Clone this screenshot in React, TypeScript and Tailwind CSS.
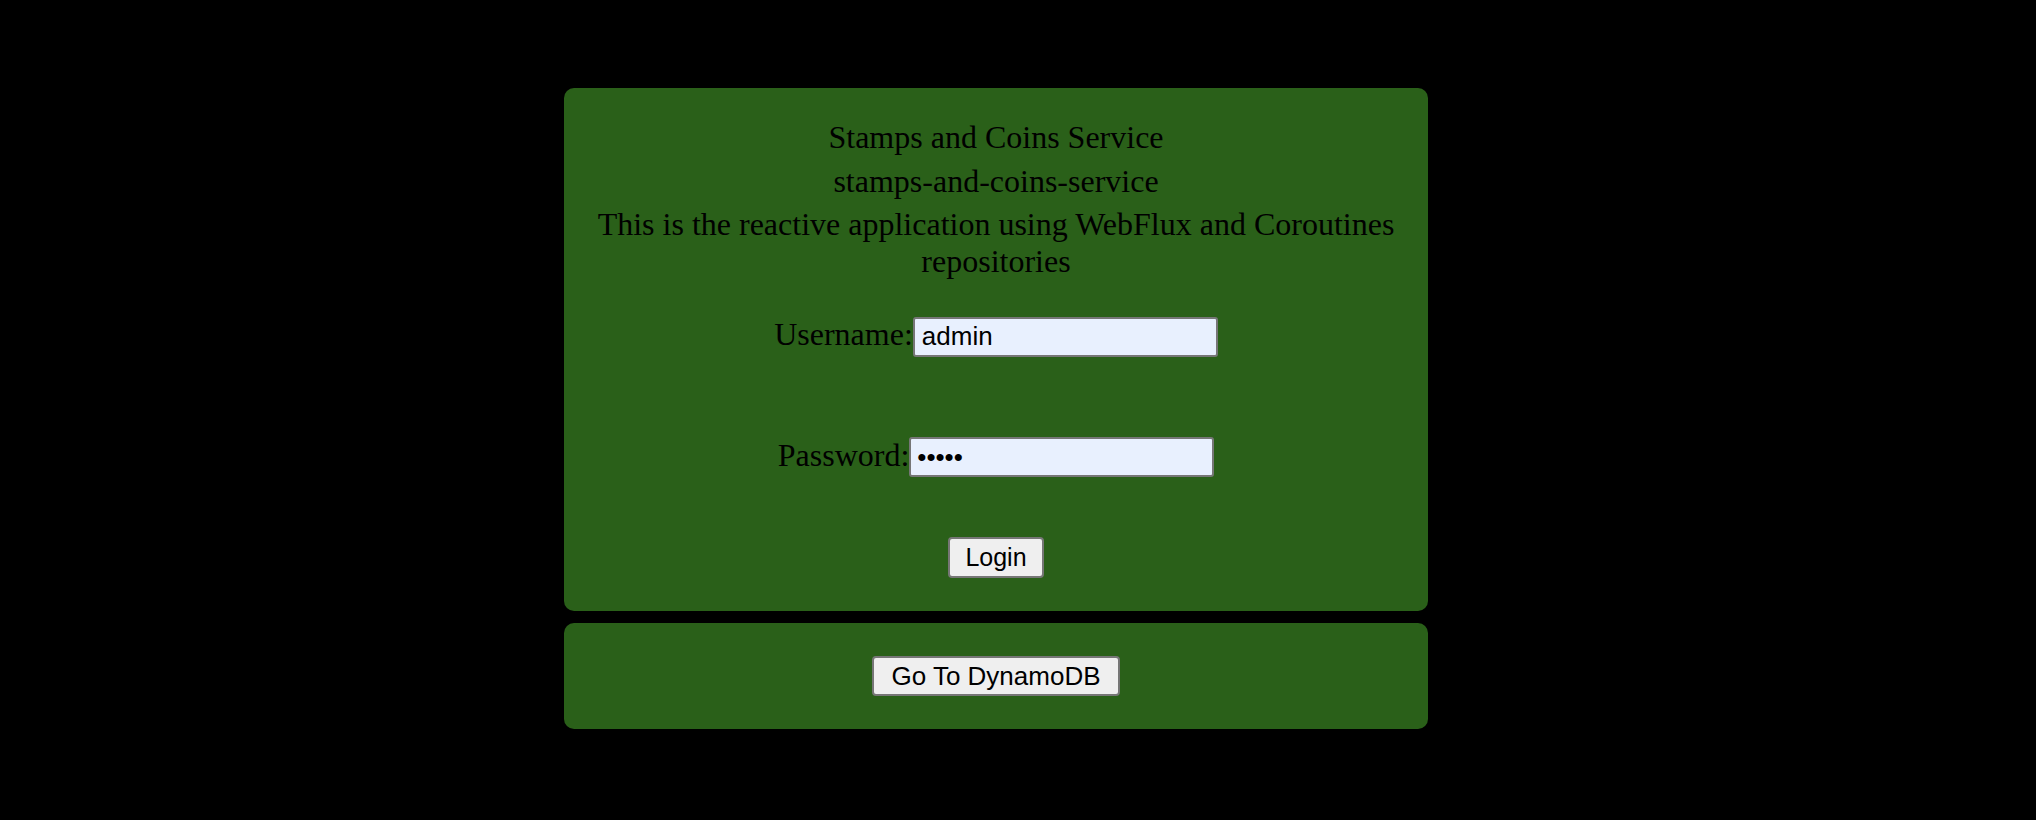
import { useState } from "react";

export default function App() {
    const [username, setUsername] = useState("admin");
    const [password, setPassword] = useState("admin");

    return (
        <div className="min-h-screen w-full bg-black pt-[88px] font-['Liberation_Serif',serif] text-black">
            <div className="ml-[564px] w-[864px] flex flex-col gap-[12px]">

                {/* Login card */}
                <div className="bg-[#2a6019] rounded-[10px] px-[20px] pt-[31px] pb-[33px] flex flex-col items-center text-center">
                    <div className="text-[32px] leading-[37px]">Stamps and Coins Service</div>
                    <div className="text-[32px] leading-[37px] mt-[7px]">stamps-and-coins-service</div>
                    <div className="text-[32px] leading-[37px] mt-[6px]">
                        This is the reactive application using WebFlux and Coroutines repositories
                    </div>

                    <div className="flex items-baseline mt-[36px]">
                        <label htmlFor="username" className="text-[32px] leading-[37px]">Username:</label>
                        <input
                            id="username"
                            type="text"
                            value={username}
                            onChange={(e) => setUsername(e.target.value)}
                            className="w-[305px] h-[40px] bg-[#e8f0fe] border-2 border-[#767676] rounded-[3px] px-[7px] text-[26px] font-['Liberation_Sans',Arial,sans-serif] outline-none"
                        />
                    </div>

                    <div className="flex items-baseline mt-[80px]">
                        <label htmlFor="password" className="text-[32px] leading-[37px]">Password:</label>
                        <input
                            id="password"
                            type="password"
                            value={password}
                            onChange={(e) => setPassword(e.target.value)}
                            className="w-[305px] h-[40px] bg-[#e8f0fe] border-2 border-[#767676] rounded-[3px] px-[6px] text-[26px] font-['Liberation_Sans',Arial,sans-serif] outline-none"
                        />
                    </div>

                    <button className="mt-[60px] h-[41px] px-[15px] bg-[#efefef] border-2 border-[#767676] rounded-[4px] text-[25px] leading-none font-['Liberation_Sans',Arial,sans-serif]">
                        Login
                    </button>
                </div>

                {/* Link card */}
                <div className="bg-[#2a6019] rounded-[10px] h-[106px] flex items-center justify-center">
                    <button className="h-[40px] px-[17px] bg-[#efefef] border-2 border-[#767676] rounded-[4px] text-[26px] leading-none font-['Liberation_Sans',Arial,sans-serif]">
                        Go To DynamoDB
                    </button>
                </div>
            </div>
        </div>
    );
}
